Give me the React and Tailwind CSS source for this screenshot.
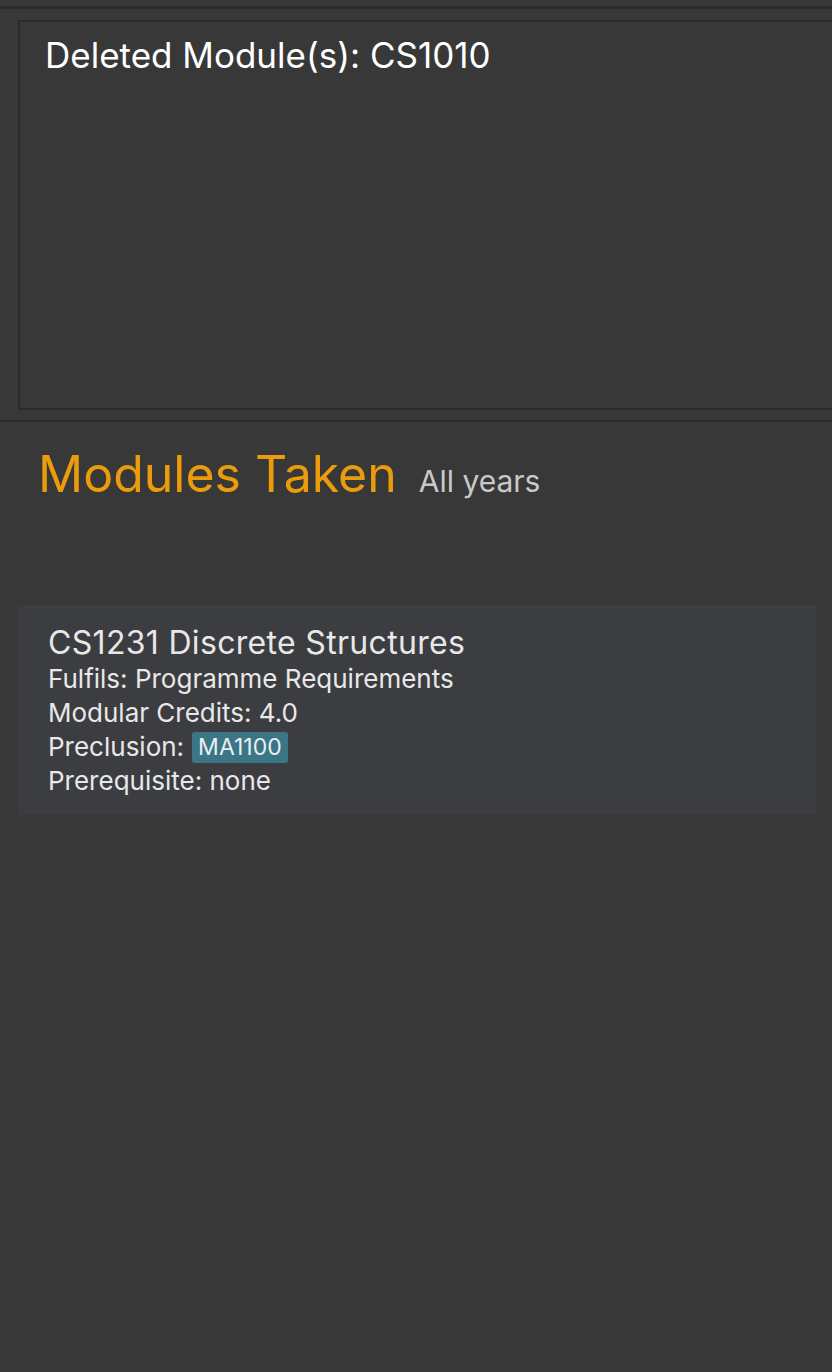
export default function App() {
  return (
    <div className="w-[832px] h-[1372px] bg-[#383838] overflow-hidden font-['Inter',sans-serif]">
      {/* top divider */}
      <div className="h-[6px]" />
      <div className="h-[3px] bg-[#2a2a2a]" />

      {/* result display */}
      <div className="pl-[18px] pt-[11px]">
        <div className="h-[390px] w-[900px] border-2 border-[#2b2b2b] pl-[25px] pt-[12px]">
          <p className="text-[35px] leading-[42px] text-white">Deleted Module(s): CS1010</p>
        </div>
      </div>
      <div className="h-[10px]" />
      <div className="h-[2px] bg-[#2a2a2a]" />

      {/* list header */}
      <div className="flex items-baseline pl-[38px] pt-[22px]">
        <h1 className="text-[50px] leading-[60px] text-[#ea9c0c]">Modules Taken</h1>
        <span className="ml-[22px] text-[30px] text-[#c9c9c9]">All years</span>
      </div>

      {/* module card */}
      <div className="mt-[101px] ml-[18px] w-[798px] h-[210px] bg-[#3c3d40] pl-[30px] pt-[18px]">
        <p className="text-[32px] leading-[39px] tracking-[0.01em] text-[#e8e8e8]">CS1231 Discrete Structures</p>
        <div className="text-[26px] leading-[34px] text-[#e8e8e8]">
          <p>Fulfils: Programme Requirements</p>
          <p>Modular Credits: 4.0</p>
          <p className="flex items-center">
            Preclusion:
            <span className="ml-[8px] h-[31px] px-[6px] rounded-[3px] bg-[#3c7586] text-[23px] leading-[31px] text-[#e6f0f2]">MA1100</span>
          </p>
          <p>Prerequisite: none</p>
        </div>
      </div>
    </div>
  );
}
